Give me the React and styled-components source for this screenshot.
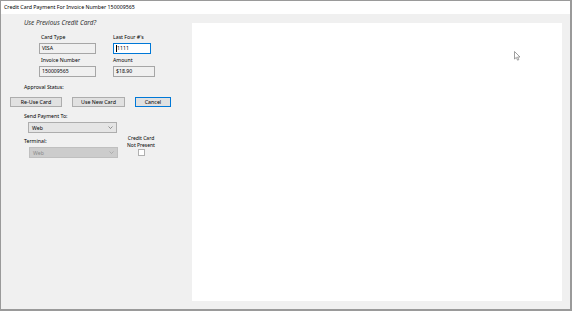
import React from 'react';
import styled, { createGlobalStyle } from 'styled-components';

const GlobalStyle = createGlobalStyle`
  html, body {
    margin: 0;
    padding: 0;
    background: #ffffff;
  }
  * {
    box-sizing: border-box;
  }
`;

const Window = styled.div`
  width: 572px;
  height: 311px;
  border: 1px solid #9a9a9a;
  border-bottom-width: 2px;
  border-right-width: 2px;
  display: flex;
  flex-direction: column;
  font-family: "Noto Sans", "Liberation Sans", sans-serif;
  color: #000;
  background: #f0f0f0;
  position: relative;
`;

const TitleBar = styled.div`
  height: 13px;
  background: #ffffff;
  font-size: 5.3px;
  line-height: 13px;
  padding-left: 3px;
  white-space: nowrap;
`;

const Body = styled.div`
  flex: 1;
  display: flex;
  padding: 9px 8px 8px 0;
`;

const FormPanel = styled.div`
  width: 191px;
  flex-shrink: 0;
  display: flex;
  flex-direction: column;
  margin-top: -9px;
`;

const Heading = styled.div`
  font-style: italic;
  font-size: 6.4px;
  line-height: 9px;
  color: #333;
  margin: 4px 0 0 23px;
`;

const FieldGrid = styled.div`
  display: grid;
  grid-template-columns: 57px 42px;
  column-gap: 17px;
  margin-left: 38px;
  margin-top: 6px;
`;

const Field = styled.div`
  display: flex;
  flex-direction: column;
  gap: 2px;
  margin-bottom: ${p => p.$mb || 0}px;
`;

const Label = styled.div`
  font-size: 5.2px;
  line-height: 8px;
  height: 8px;
  padding-left: ${p => p.$indent || 0}px;
  white-space: nowrap;
`;

const TextBox = styled.div`
  height: 11px;
  width: ${p => p.$w || 57}px;
  border: 1px solid ${p => (p.$focused ? '#0078d7' : '#a6a6a6')};
  background: ${p => (p.$focused ? '#ffffff' : '#f0f0f0')};
  font-size: 5.2px;
  line-height: 9px;
  padding-left: 2px;
  display: flex;
  align-items: center;
`;

const Caret = styled.span`
  display: inline-block;
  width: 1px;
  height: 7px;
  background: #000;
`;

const Section = styled.div`
  margin: ${p => p.$mt || 0}px 0 0 ${p => p.$ml || 0}px;
`;

const ButtonRow = styled.div`
  display: flex;
  gap: 10px;
  margin: 6px 0 0 9px;
`;

const Button = styled.button`
  height: 10px;
  width: ${p => p.$w}px;
  padding: 0;
  margin: 0;
  background: #e1e1e1;
  border: 1px solid ${p => (p.$default ? '#0078d7' : '#adadad')};
  font-family: inherit;
  font-size: 5.3px;
  line-height: 8px;
  color: #000;
`;

const SelectBox = styled.div`
  height: 11px;
  width: 89px;
  margin-left: ${p => p.$ml || 0}px;
  border: 1px solid ${p => (p.$disabled ? '#bfbfbf' : '#adadad')};
  background: ${p => (p.$disabled ? '#cccccc' : '#e5e5e5')};
  color: ${p => (p.$disabled ? '#8a8a8a' : '#000')};
  font-size: 5.2px;
  display: flex;
  align-items: center;
  justify-content: space-between;
  padding: 0 3px;
`;

const Chevron = styled.svg`
  width: 5px;
  height: 3px;
`;

const LowerRow = styled.div`
  display: flex;
  margin: 4px 0 0 23px;
`;

const Column = styled.div`
  display: flex;
  flex-direction: column;
  gap: 2px;
  width: 94px;
`;

const CheckBlock = styled.div`
  width: 46px;
  margin-top: -2px;
  display: flex;
  flex-direction: column;
  align-items: center;
  font-size: 5px;
  line-height: 6.5px;
  text-align: center;
`;

const CheckBox = styled.div`
  width: 7px;
  height: 7px;
  border: 1px solid #b0b0b0;
  background: #fff;
  margin-top: 1px;
`;

const Canvas = styled.div`
  flex: 1;
  background: #ffffff;
  position: relative;
`;

const Cursor = styled.svg`
  position: absolute;
  left: 322px;
  top: 28px;
  width: 7px;
  height: 10px;
`;

const ChevronIcon = ({ color }) => (
  <Chevron viewBox="0 0 5 3">
    <path d="M0.5 0.5 L2.5 2.5 L4.5 0.5" fill="none" stroke={color} strokeWidth="0.6" />
  </Chevron>
);

export default function App() {
  return (
    <>
      <GlobalStyle />
      <Window>
        <TitleBar>Credit Card Payment For Invoice Number 150009565</TitleBar>
        <Body>
          <FormPanel>
            <Heading>Use Previous Credit Card?</Heading>
            <FieldGrid>
              <Field $mb={2}>
                <Label $indent={2}>Card Type</Label>
                <TextBox>VISA</TextBox>
              </Field>
              <Field $mb={2}>
                <Label>Last Four #'s</Label>
                <TextBox $w={38} $focused>
                  <Caret />1111
                </TextBox>
              </Field>
              <Field>
                <Label $indent={2}>Invoice Number</Label>
                <TextBox>150009565</TextBox>
              </Field>
              <Field>
                <Label>Amount</Label>
                <TextBox $w={42}>$18.90</TextBox>
              </Field>
            </FieldGrid>
            <Section $mt={6} $ml={23}>
              <Label>Approval Status:</Label>
            </Section>
            <ButtonRow>
              <Button $w={52}>Re-Use Card</Button>
              <Button $w={53}>Use New Card</Button>
              <Button $w={36} $default>Cancel</Button>
            </ButtonRow>
            <Section $mt={5} $ml={23}>
              <Column>
                <Label>Send Payment To:</Label>
                <SelectBox $ml={4}>
                  <span>Web</span>
                  <ChevronIcon color="#555" />
                </SelectBox>
              </Column>
            </Section>
            <LowerRow>
              <Column>
                <Label>Terminal:</Label>
                <SelectBox $ml={5} $disabled>
                  <span>Web</span>
                  <ChevronIcon color="#999" />
                </SelectBox>
              </Column>
              <CheckBlock>
                <span>Credit Card</span>
                <span>Not Present</span>
                <CheckBox />
              </CheckBlock>
            </LowerRow>
          </FormPanel>
          <Canvas>
            <Cursor viewBox="0 0 7 10">
              <path d="M0.5 0.5 L0.5 8 L2.3 6.4 L3.6 9.2 L4.8 8.6 L3.6 6 L6 6 Z" fill="#fff" stroke="#777" strokeWidth="0.7" />
            </Cursor>
          </Canvas>
        </Body>
      </Window>
    </>
  );
}
